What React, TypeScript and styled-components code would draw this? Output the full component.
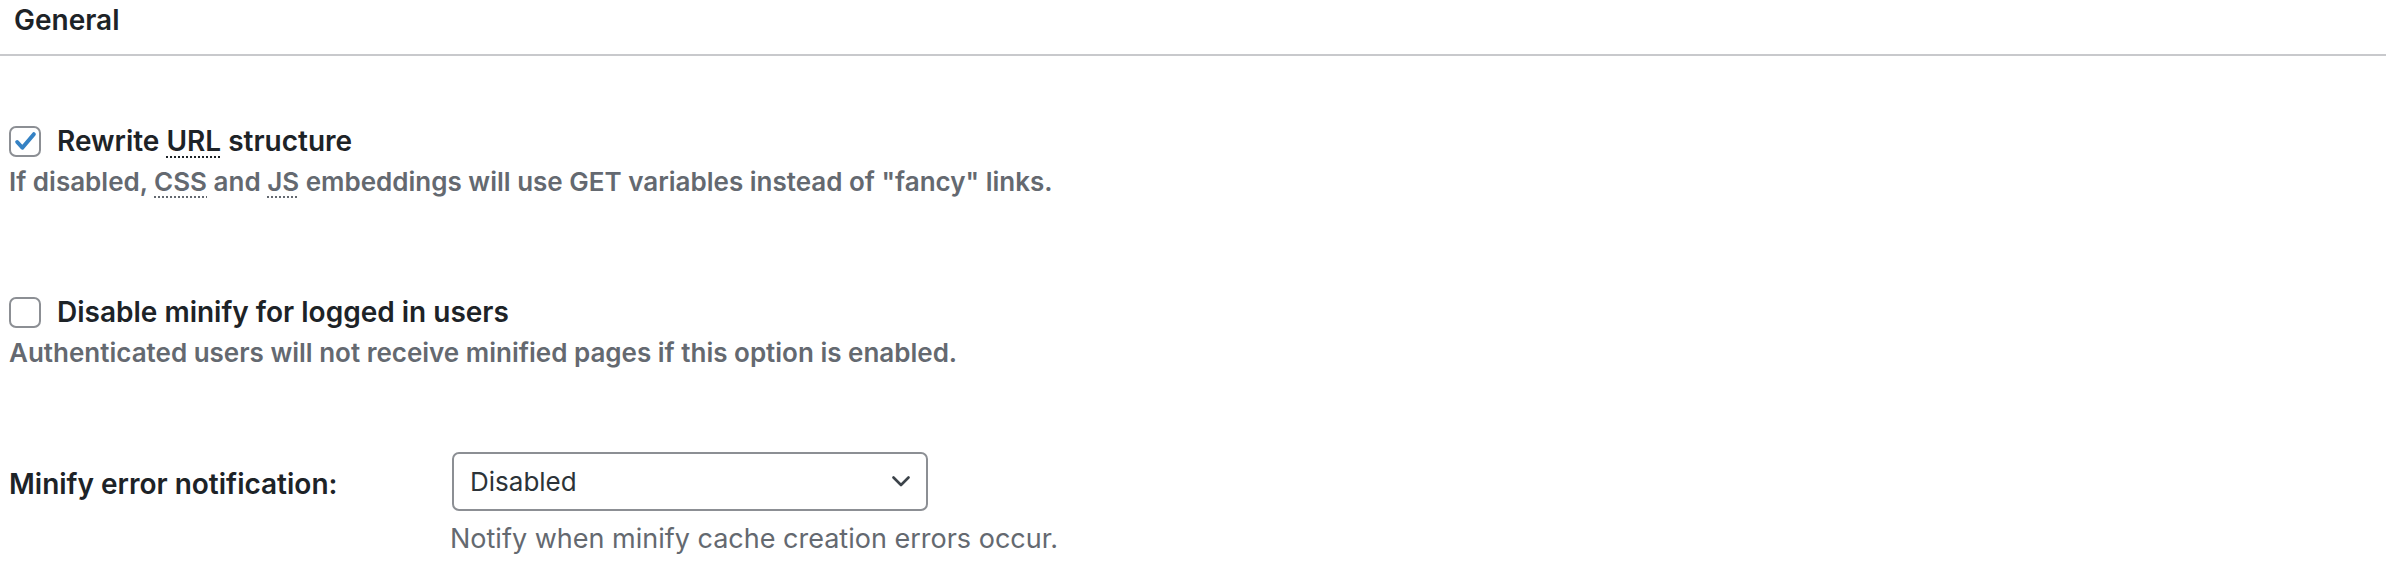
import React, { useState } from "react";
import styled, { createGlobalStyle } from "styled-components";

const GlobalStyle = createGlobalStyle`
  body {
    margin: 0;
    background: #fff;
    font-family: Inter, "Noto Sans", sans-serif;
    color: #1d2327;
  }
`;

const Header = styled.div`
  height: 56px;
  padding: 6px 14px 0;
  box-sizing: border-box;
  border-bottom: 2px solid #c8c9cc;
`;

const Title = styled.h2`
  margin: 0;
  font-size: 28px;
  line-height: 1;
  font-weight: 600;
`;

const Section = styled.div`
  padding: 69px 9px 0;
`;

const Option = styled.div<{ $space: number }>`
  margin-bottom: ${(p) => p.$space}px;
`;

const CheckRow = styled.label`
  display: flex;
  align-items: center;
  gap: 16px;
  cursor: pointer;
`;

const Box = styled.span<{ $checked: boolean }>`
  width: 32px;
  height: 31px;
  box-sizing: border-box;
  border: 2px solid #8c8f94;
  border-radius: 7px;
  display: flex;
  align-items: center;
  justify-content: center;
  background: #fff;

  > svg {
    width: 25px;
    height: 25px;
    visibility: ${(p) => (p.$checked ? "visible" : "hidden")};
  }
`;

const LabelText = styled.span`
  font-size: 28px;
  font-weight: 600;
  line-height: 32px;
`;

const Abbr = styled.abbr`
  text-decoration: underline dotted;
  text-decoration-thickness: 2px;
  text-underline-offset: 5px;
`;

const Description = styled.p<{ $bold?: boolean }>`
  margin: 9px 0 0;
  font-size: 26px;
  line-height: 32px;
  font-weight: ${(p) => (p.$bold ? 600 : 400)};
  color: #646970;
  white-space: nowrap;
`;

const FieldRow = styled.div`
  display: grid;
  grid-template-columns: 443px 476px;
  align-items: center;
`;

const FieldLabel = styled.span`
  font-size: 28px;
  font-weight: 600;
  line-height: 32px;
  padding-top: 4px;
`;

const SelectBox = styled.div`
  height: 59px;
  box-sizing: border-box;
  border: 2px solid #8c8f94;
  border-radius: 7px;
  padding: 0 16px;
  display: flex;
  align-items: center;
  justify-content: space-between;
  font-size: 26px;
  color: #2c3338;
`;

const FieldHelp = styled(Description)`
  grid-column: 2;
  margin: 12px 0 0 -2px;
  font-size: 27px;
`;

const Checkbox = ({
  checked,
  onToggle,
  children,
}: {
  checked: boolean;
  onToggle: () => void;
  children: React.ReactNode;
}) => (
  <CheckRow onClick={onToggle}>
    <Box $checked={checked}>
      <svg viewBox="0 0 24 24" fill="none">
        <path
          d="M4 12.5l5 5.5L20 5"
          stroke="#3582c4"
          strokeWidth="3.8"
          strokeLinecap="round"
          strokeLinejoin="round"
        />
      </svg>
    </Box>
    <LabelText>{children}</LabelText>
  </CheckRow>
);

const App = () => {
  const [rewrite, setRewrite] = useState(true);
  const [disableLogged, setDisableLogged] = useState(false);

  return (
    <>
      <GlobalStyle />
      <Header>
        <Title>General</Title>
      </Header>
      <Section>
        <Option $space={98}>
          <Checkbox checked={rewrite} onToggle={() => setRewrite(!rewrite)}>
            Rewrite <Abbr>URL</Abbr> structure
          </Checkbox>
          <Description $bold>
            If disabled, <Abbr>CSS</Abbr> and <Abbr>JS</Abbr> embeddings will
            use GET variables instead of "fancy" links.
          </Description>
        </Option>
        <Option $space={83}>
          <Checkbox
            checked={disableLogged}
            onToggle={() => setDisableLogged(!disableLogged)}
          >
            Disable minify for logged in users
          </Checkbox>
          <Description $bold>
            Authenticated users will not receive minified pages if this option
            is enabled.
          </Description>
        </Option>
        <FieldRow>
          <FieldLabel>Minify error notification:</FieldLabel>
          <SelectBox>
            Disabled
            <svg width="18" height="11" viewBox="0 0 18 11" fill="none">
              <path
                d="M1.5 1.5L9 9l7.5-7.5"
                stroke="#3c434a"
                strokeWidth="2.6"
                strokeLinecap="round"
                strokeLinejoin="round"
              />
            </svg>
          </SelectBox>
          <FieldHelp>Notify when minify cache creation errors occur.</FieldHelp>
        </FieldRow>
      </Section>
    </>
  );
};

export default App;
